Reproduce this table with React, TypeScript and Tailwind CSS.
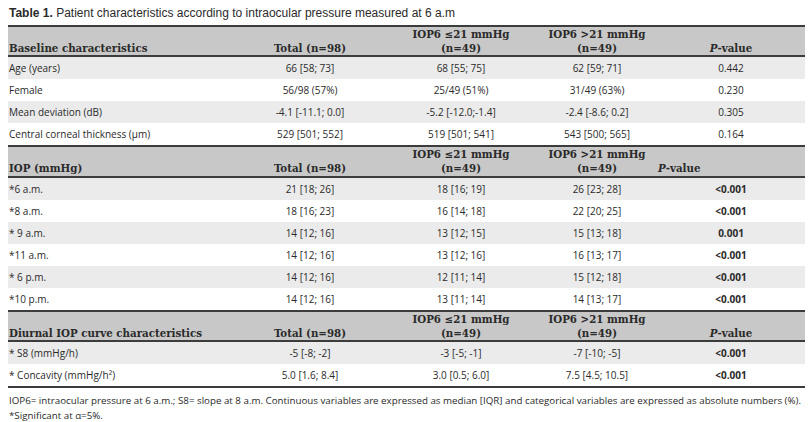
import React from "react";

type Row = {
  label: string;
  total: string;
  low: string;
  high: string;
  p: string;
};

type SectionProps = {
  title: string;
  rows: Row[];
  boldP?: boolean;
  shiftP?: boolean;
  tall?: boolean;
};

const grid = "grid grid-cols-[227px_150px_152px_120px_148px]";
const headFont = "font-['DejaVu_Serif',serif] font-bold text-[10.25px] leading-[14px] text-[#2a2a2a]";

const baseline: Row[] = [
  { label: "Age (years)", total: "66 [58; 73]", low: "68 [55; 75]", high: "62 [59; 71]", p: "0.442" },
  { label: "Female", total: "56/98 (57%)", low: "25/49 (51%)", high: "31/49 (63%)", p: "0.230" },
  { label: "Mean deviation (dB)", total: "-4.1 [-11.1; 0.0]", low: "-5.2 [-12.0;-1.4]", high: "-2.4 [-8.6; 0.2]", p: "0.305" },
  { label: "Central corneal thickness (µm)", total: "529 [501; 552]", low: "519 [501; 541]", high: "543 [500; 565]", p: "0.164" },
];

const iop: Row[] = [
  { label: "*6 a.m.", total: "21 [18; 26]", low: "18 [16; 19]", high: "26 [23; 28]", p: "<0.001" },
  { label: "*8 a.m.", total: "18 [16; 23]", low: "16 [14; 18]", high: "22 [20; 25]", p: "<0.001" },
  { label: "* 9 a.m.", total: "14 [12; 16]", low: "13 [12; 15]", high: "15 [13; 18]", p: "0.001" },
  { label: "*11 a.m.", total: "14 [12; 16]", low: "13 [12; 16]", high: "16 [13; 17]", p: "<0.001" },
  { label: "* 6 p.m.", total: "14 [12; 16]", low: "12 [11; 14]", high: "15 [12; 18]", p: "<0.001" },
  { label: "*10 p.m.", total: "14 [12; 16]", low: "13 [11; 14]", high: "14 [13; 17]", p: "<0.001" },
];

const diurnal: Row[] = [
  { label: "* S8 (mmHg/h)", total: "-5 [-8; -2]", low: "-3 [-5; -1]", high: "-7 [-10; -5]", p: "<0.001" },
  { label: "* Concavity (mmHg/h²)", total: "5.0 [1.6; 8.4]", low: "3.0 [0.5; 6.0]", high: "7.5 [4.5; 10.5]", p: "<0.001" },
];

const Section = ({ title, rows, boldP, shiftP, tall }: SectionProps) => (
  <div className="border-t-2 border-[#3c3c3c]">
    <div
      className={`${grid} ${tall ? "h-[31px]" : "h-[30px]"} items-end bg-[#c8c8c8] border-b-2 border-[#3c3c3c] pb-[1px] ${headFont}`}
    >
      <div className="pl-[1px]">{title}</div>
      <div className="text-center">Total (n=98)</div>
      <div className="text-center">
        IOP6 ≤21 mmHg
        <br />
        (n=49)
      </div>
      <div className="text-center">
        IOP6 &gt;21 mmHg
        <br />
        (n=49)
      </div>
      <div className={shiftP ? "pl-[1px]" : "text-center"}>
        <span className="italic">P</span>-value
      </div>
    </div>
    {rows.map((row, i) => (
      <div
        key={row.label}
        className={`${grid} h-[22px] items-center text-[10px] text-[#2a2a2a] ${i % 2 === 0 ? "bg-[#ebebeb]" : "bg-white"}`}
      >
        <div className="pl-[1px]">{row.label}</div>
        <div className="text-center">{row.total}</div>
        <div className="text-center">{row.low}</div>
        <div className="text-center">{row.high}</div>
        <div className={`text-center ${boldP ? "font-bold" : ""}`}>{row.p}</div>
      </div>
    ))}
  </div>
);

export default function App() {
  return (
    <div className="w-[810px] h-[422px] bg-white pl-[8px] font-['Open_Sans',sans-serif] text-[#2a2a2a]">
      <div className="w-[797px]">
        <div className="h-[25px] pt-[5px] pl-[1px] text-[12px] leading-[16px] font-['Liberation_Sans',sans-serif]">
          <span className="font-bold">Table 1.</span> Patient characteristics according to intraocular pressure measured at 6 a.m
        </div>
        <Section title="Baseline characteristics" rows={baseline} />
        <Section title="IOP (mmHg)" rows={iop} boldP shiftP tall />
        <Section title="Diurnal IOP curve characteristics" rows={diurnal} boldP />
        <div className="border-t-2 border-[#3c3c3c] pt-[5px] pl-[1px] text-[9.75px] leading-[15px]">
          <div>
            IOP6= intraocular pressure at 6 a.m.; S8= slope at 8 a.m. Continuous variables are expressed as median [IQR] and categorical variables are expressed as absolute numbers (%).
          </div>
          <div>*Significant at α=5%.</div>
        </div>
      </div>
    </div>
  );
}
